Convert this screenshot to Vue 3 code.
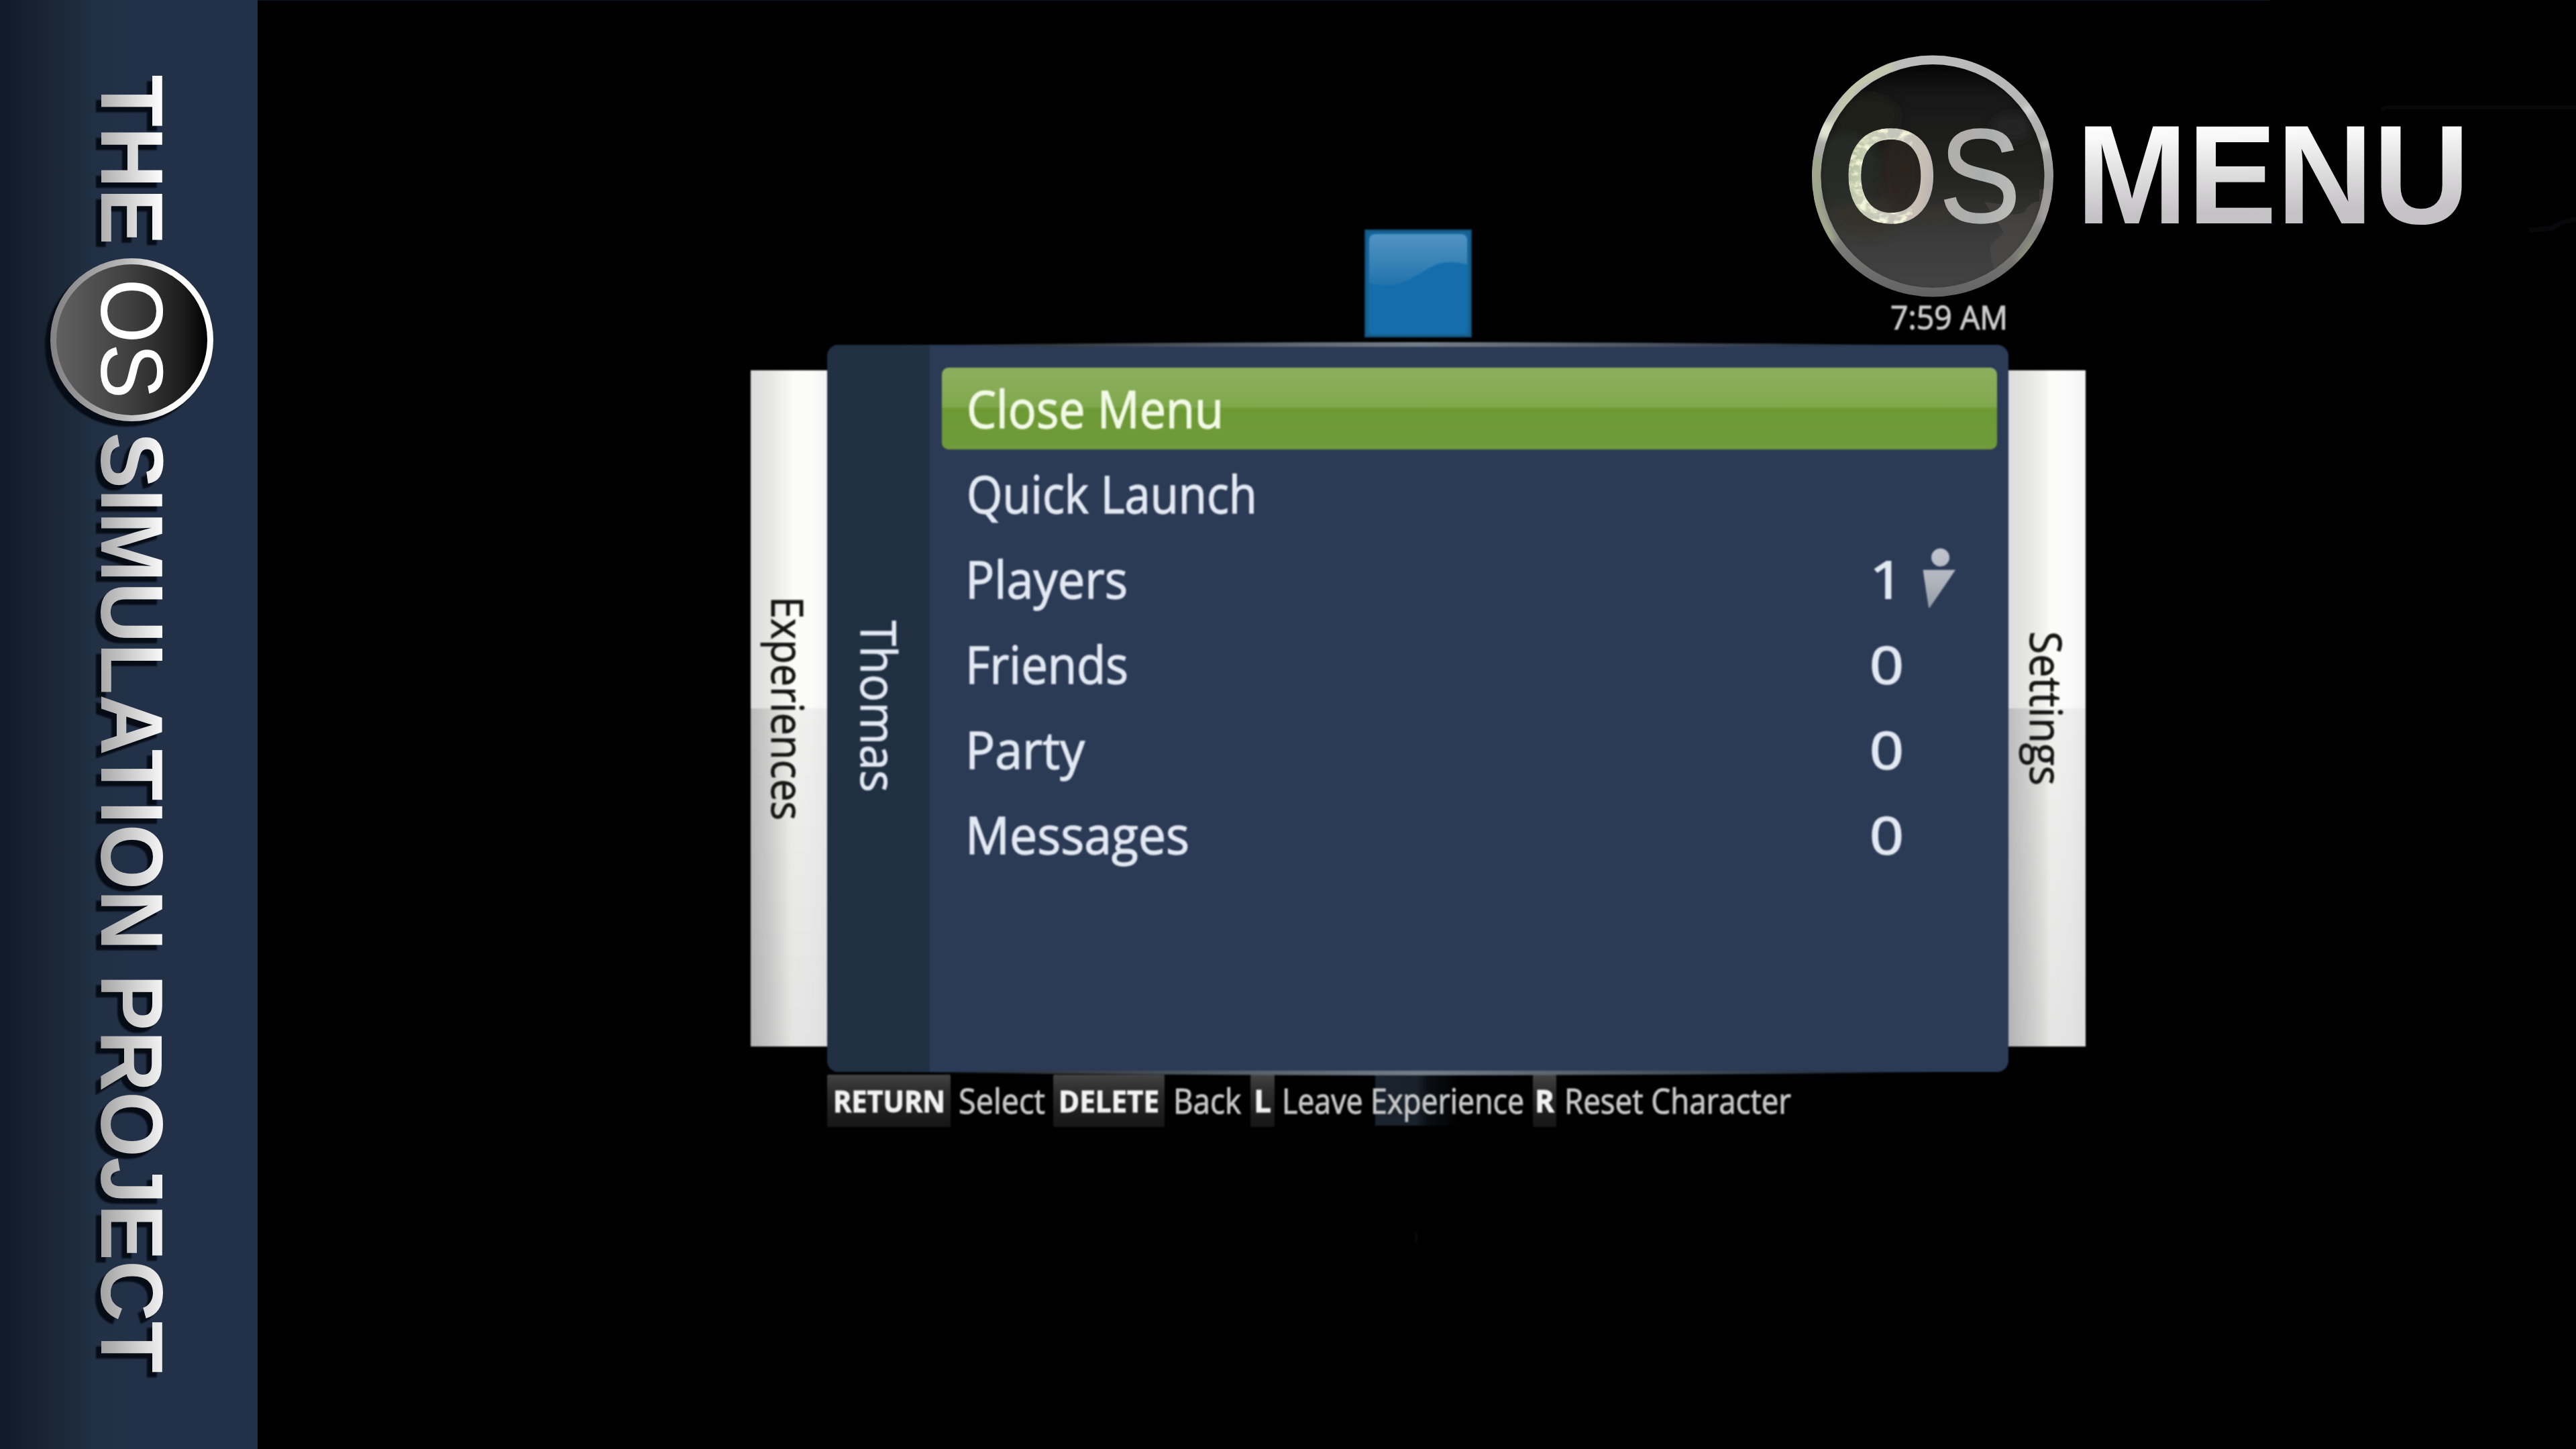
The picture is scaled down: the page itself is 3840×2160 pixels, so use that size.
<script setup>
import { h } from 'vue'

// A single line of text stretched to an exact advance; its box is the cap height.
const FitText = (p) => {
  const down = p.vertical !== undefined && p.vertical !== false
  return h(
    'svg',
    {
      width: down ? p.cap : p.len,
      height: down ? p.len : p.cap,
      overflow: 'visible',
      style: { display: 'block', flex: 'none', fontSize: p.size + 'px' },
    },
    [
      h(
        'text',
        {
          x: 0,
          y: down ? 0 : p.cap,
          fill: 'currentColor',
          stroke: 'currentColor',
          'stroke-width': p.weight || 0.9,
          textLength: p.len,
          lengthAdjust: 'spacingAndGlyphs',
          transform: down ? 'rotate(90)' : undefined,
        },
        p.text
      ),
    ]
  )
}
FitText.props = ['text', 'len', 'cap', 'size', 'vertical', 'weight']

const items = [
  { label: 'Close Menu', len: 383, inset: 36.5, active: true },
  { label: 'Quick Launch', len: 433, inset: 36.5 },
  { label: 'Players', len: 242, inset: 35, count: '1', person: true },
  { label: 'Friends', len: 243, inset: 35, count: '0' },
  { label: 'Party', len: 178, inset: 35, count: '0' },
  { label: 'Messages', len: 334, inset: 35, count: '0' },
]

const hints = [
  { key: 'RETURN', box: 184, keyLen: 167, keySize: 44, label: 'Select', len: 129, lead: 12, trail: 12 },
  { key: 'DELETE', box: 166, keyLen: 150, keySize: 44, label: 'Back', len: 101, lead: 12.5, trail: 14.5 },
  { key: 'L', box: 36, keyLen: 26, keySize: 46, label: 'Leave Experience', len: 361, lead: 11, trail: 13 },
  { key: 'R', box: 35, keyLen: 29, keySize: 46, label: 'Reset Character', len: 338, lead: 12, trail: 0 },
]
</script>

<template>
  <div class="screen">
    <aside class="sidebar">
      <svg width="384" height="2160" viewBox="0 0 384 2160">
        <defs>
          <linearGradient id="silver" gradientUnits="userSpaceOnUse" x1="110" y1="-91" x2="111" y2="16">
            <stop offset="0" stop-color="#ffffff" />
            <stop offset="1" stop-color="#a4a3a4" />
          </linearGradient>
          <linearGradient id="sideRing" x1="0" y1="0" x2="1" y2="0">
            <stop offset="0" stop-color="#838183" />
            <stop offset="0.45" stop-color="#b6b6b6" />
            <stop offset="0.75" stop-color="#ffffff" />
          </linearGradient>
          <linearGradient id="sideDisc" x1="0" y1="0" x2="1" y2="0">
            <stop offset="0" stop-color="#616161" />
            <stop offset="0.5" stop-color="#3e3e3e" />
            <stop offset="0.85" stop-color="#1b1b1b" />
            <stop offset="1" stop-color="#000000" />
          </linearGradient>
        </defs>
        <g class="brand" transform="translate(151 0) rotate(90)" fill="url(#silver)">
          <text x="111.5" y="0" textLength="253.5" lengthAdjust="spacingAndGlyphs">THE</text>
          <text x="644.3" y="0" textLength="772.8" lengthAdjust="spacingAndGlyphs">SIMULATION</text>
          <text x="1452.2" y="0" textLength="594.5" lengthAdjust="spacingAndGlyphs">PROJECT</text>
        </g>
        <g class="coin">
          <circle cx="196.5" cy="506.5" r="121.5" fill="url(#sideRing)" />
          <circle cx="196.5" cy="506.5" r="112.5" fill="url(#sideDisc)" />
        </g>
        <g transform="translate(151 0) rotate(90)" fill="#fff">
          <text class="os" font-size="132" x="415.5" y="0" textLength="179" lengthAdjust="spacingAndGlyphs">OS</text>
        </g>
      </svg>
    </aside>

    <main class="stage">
      <svg class="glints" width="3456" height="2160">
        <path d="M0 .5H3000" stroke="#08131b" />
        <path d="M3166 163l8-3H3456" stroke="#08080a" stroke-width="6" fill="none" />
        <path d="M3386 343l35-3 12-8 23-5" stroke="#08080a" stroke-width="7" fill="none" />
        <path d="M1727 1837v16" stroke="#070708" stroke-width="5" />
      </svg>

      <header class="title">
        <svg width="980" height="361" viewBox="0 0 980 361">
          <defs>
            <linearGradient id="ring" x1="0" y1="0" x2="0" y2="1">
              <stop offset="0" stop-color="#bcbcbc" />
              <stop offset="0.25" stop-color="#b6b6b6" />
              <stop offset="0.5" stop-color="#9b9b9a" />
              <stop offset="0.75" stop-color="#7f7f7d" />
              <stop offset="1" stop-color="#636263" />
            </linearGradient>
            <linearGradient id="disc" x1="0" y1="0" x2="0" y2="1">
              <stop offset="0" stop-color="#060606" />
              <stop offset="0.14" stop-color="#171717" />
              <stop offset="0.5" stop-color="#232322" />
              <stop offset="0.75" stop-color="#3a3a3a" />
              <stop offset="1" stop-color="#434343" />
            </linearGradient>
            <linearGradient id="osFill" gradientUnits="userSpaceOnUse" x1="53" y1="150" x2="305" y2="190">
              <stop offset="0" stop-color="#b4bb9c" />
              <stop offset="0.1" stop-color="#c8ceb2" />
              <stop offset="0.25" stop-color="#c4c5bb" />
              <stop offset="0.45" stop-color="#c8beb4" />
              <stop offset="0.56" stop-color="#b2afae" />
              <stop offset="0.8" stop-color="#acadad" />
              <stop offset="1" stop-color="#bbbcba" />
            </linearGradient>
            <linearGradient id="menuFill" x1="0" y1="109" x2="4" y2="253" gradientUnits="userSpaceOnUse">
              <stop offset="0" stop-color="#ffffff" />
              <stop offset="0.2" stop-color="#f8f8f8" />
              <stop offset="1" stop-color="#c4c2c4" />
            </linearGradient>
            <filter id="soft" x="-50%" y="-50%" width="200%" height="200%">
              <feGaussianBlur stdDeviation="7" />
            </filter>
            <filter id="softEdge"><feGaussianBlur stdDeviation="4" /></filter>
            <filter id="leaves" filterUnits="userSpaceOnUse" x="0" y="0" width="362" height="362" color-interpolation-filters="sRGB">
              <feTurbulence type="fractalNoise" baseFrequency="0.07 0.09" numOctaves="4" seed="7" x="0" y="0" width="150" height="300" />
              <feColorMatrix values="0 0 0 0 0.96  0 0 0 0 0.97  0 0 0 0 0.86  3.6 0 0 0 -1.65" result="light" />
              <feComposite in="light" in2="SourceAlpha" operator="in" result="flecks" />
              <feMerge>
                <feMergeNode in="SourceGraphic" />
                <feMergeNode in="flecks" />
              </feMerge>
            </filter>
            <clipPath id="inner"><circle cx="180" cy="180.5" r="166.5" /></clipPath>
            <clipPath id="band">
              <path clip-rule="evenodd" d="M0 180a180 180 0 1 0 360 0a180 180 0 1 0-360 0M13 180a167 167 0 1 0 334 0a167 167 0 1 0-334 0" />
            </clipPath>
          </defs>
          <circle cx="180" cy="180.5" r="180" fill="url(#ring)" />
          <g clip-path="url(#band)">
            <g filter="url(#softEdge)">
              <path d="M22 128L62 45L120 15" stroke="#c3c8ab" stroke-width="16" fill="none" />
              <path d="M20 100v24" stroke="#e2e3d2" stroke-width="22" fill="none" />
              <path d="M6 150v70l24 60" stroke="#a0a68a" stroke-width="16" fill="none" />
              <path d="M318 78l8 8M342 132l10 4" stroke="#dadbd6" stroke-width="12" fill="none" />
              <path d="M352 200l-6 50" stroke="#a39d9c" stroke-width="16" fill="none" />
              <path d="M332 275l-22 34" stroke="#8a8d78" stroke-width="16" fill="none" />
            </g>
          </g>
          <circle cx="180" cy="180.5" r="166.5" fill="url(#disc)" />
          <g clip-path="url(#inner)">
            <g filter="url(#soft)">
              <ellipse cx="50" cy="165" rx="50" ry="50" fill="#2b2e27" opacity="0.7" />
              <ellipse cx="80" cy="90" rx="50" ry="30" fill="#20211d" opacity="0.8" />
              <ellipse cx="80" cy="245" rx="50" ry="26" fill="#30332a" opacity="0.6" />
              <ellipse cx="133" cy="175" rx="28" ry="60" fill="#2c211a" opacity="0.7" />
              <ellipse cx="180" cy="238" rx="30" ry="8" fill="#3a3828" opacity="0.7" />
              <ellipse cx="298" cy="108" rx="30" ry="20" fill="#262827" opacity="0.8" />
            </g>
            <path d="M257 219l30 4l6 14q10 2 24-3q6-14 22-16v-18h20v120l-76 26q-18-30-17-63l20-18l-12-20z" fill="#55544f" opacity="0.42" />
            <circle cx="180" cy="184" r="170" fill="none" stroke="#000" stroke-opacity="0.3" stroke-width="5" filter="url(#softEdge)" />
          </g>
          <text class="os" font-size="198" x="46.5" y="248.5" textLength="265" lengthAdjust="spacingAndGlyphs" fill="url(#osFill)" stroke="url(#osFill)" stroke-width="1.4" filter="url(#leaves)">OS</text>
          <text class="word" x="394" y="251" textLength="586.6" lengthAdjust="spacingAndGlyphs" fill="url(#menuFill)">MENU</text>
        </svg>
      </header>

      <section class="console">
        <div class="clock"><FitText text="7:59 AM" :len="175" :cap="35" :size="49" :weight="1.2" /></div>

        <div class="deck">
          <div class="tab tab-left"><FitText vertical text="Experiences" :len="334" :cap="47" :size="66" /></div>
          <div class="panel">
            <nav class="user"><FitText vertical text="Thomas" :len="256" :cap="53" :size="74" /></nav>
            <ul class="list">
              <li v-for="item in items" :key="item.label" class="row" :class="{ active: item.active }" :style="{ paddingLeft: item.inset + 'px' }">
                <FitText :text="item.label" :len="item.len" :cap="55" :size="77" :weight="1.3" />
                <span v-if="item.count" class="count"><FitText :text="item.count" :len="51" :cap="55" :size="77" :weight="1.8" /></span>
                <span v-if="item.count" class="mark">
                  <svg v-if="item.person" width="50" height="90" viewBox="0 0 50 90">
                    <defs>
                      <linearGradient id="body" gradientUnits="userSpaceOnUse" x1="0" y1="0" x2="0" y2="90">
                        <stop offset="0" stop-color="#c0c5d0" />
                        <stop offset="0.6" stop-color="#aeb3bb" />
                        <stop offset="1" stop-color="#909aa3" />
                      </linearGradient>
                    </defs>
                    <circle cx="26.5" cy="14" r="13.5" fill="url(#body)" />
                    <path d="M.5 32.5H49L10.5 89H9z" fill="url(#body)" />
                  </svg>
                </span>
              </li>
            </ul>
          </div>
          <div class="tab tab-right"><FitText vertical text="Settings" :len="230" :cap="47" :size="66" /></div>

          <svg class="tile" width="160" height="161" viewBox="0 0 160 161">
            <defs>
              <linearGradient id="gloss" x1="0" y1="0" x2="0" y2="1">
                <stop offset="0" stop-color="#5294c3" />
                <stop offset="1" stop-color="#2274ac" />
              </linearGradient>
            </defs>
            <rect width="160" height="161" fill="#0e4a74" />
            <rect x="2" y="2" width="156" height="157" fill="#176190" />
            <rect x="6" y="6" width="148" height="150" rx="6" fill="#156dab" />
            <path d="M7 80V17Q7 7 17 7H143Q153 7 153 17V52C125 46 113 48 94 59C66 76 50 85 28 83Q15 82 7 80Z" fill="url(#gloss)" />
          </svg>

          <svg class="rim rim-top" width="1761" height="8" viewBox="0 0 1761 8" preserveAspectRatio="none">
            <defs>
              <linearGradient id="rim" x1="0" y1="0" x2="1" y2="0">
                <stop offset="0" stop-color="#2b3a55" stop-opacity="0" />
                <stop offset="0.15" stop-color="#30373f" />
                <stop offset="0.35" stop-color="#59616a" />
                <stop offset="0.5" stop-color="#747e88" />
                <stop offset="0.65" stop-color="#59616a" />
                <stop offset="0.85" stop-color="#2b3645" />
                <stop offset="1" stop-color="#2b3a55" stop-opacity="0" />
              </linearGradient>
            </defs>
            <path d="M80 5Q500 0 880 0T1680 5L1500 7H260Z" fill="url(#rim)" />
          </svg>
          <svg class="rim rim-bottom" width="1761" height="8" viewBox="0 0 1761 8">
            <path d="M80 2Q500 7 880 7T1680 2L1500 0H260Z" fill="url(#rim)" />
          </svg>
        </div>

        <footer class="hints">
          <template v-for="hint in hints" :key="hint.key">
            <kbd class="key" :style="{ width: hint.box + 'px' }">
              <FitText :text="hint.key" :len="hint.keyLen" :cap="hint.keySize * 0.72" :size="hint.keySize" />
            </kbd>
            <span class="hint" :style="{ marginLeft: hint.lead + 'px', marginRight: hint.trail + 'px' }">
              <FitText :text="hint.label" :len="hint.len" :cap="37" :size="51" :weight="1.1" />
            </span>
          </template>
        </footer>
      </section>
    </main>
  </div>
</template>

<style>
html,
body {
  background: #000;
  overflow: hidden;
}
</style>

<style scoped>
.screen {
  display: flex;
  width: 3840px;
  height: 2160px;
  overflow: hidden;
  background: #000;
  font-family: 'Open Sans', 'Noto Sans', sans-serif;
}
.sidebar {
  flex: none;
  width: 384px;
  height: 2160px;
  background: linear-gradient(90deg, #111a28 0, #16222f 50px, #1c2939 95px, #223045 145px, #233148 200px);
}
.sidebar svg,
.title svg {
  display: block;
  overflow: visible;
}
.brand text,
.word {
  font-family: 'Liberation Sans', Arial, sans-serif;
  font-weight: 700;
  font-size: 132px;
}
.word {
  font-size: 209.3px;
}
.os {
  font-family: 'Liberation Sans', Arial, sans-serif;
}
.brand {
  filter: drop-shadow(8px 8px 1px #060c15);
}
.coin {
  filter: drop-shadow(-8px 8px 1px #060c15);
}
.stage {
  position: relative;
  width: 3456px;
  display: flex;
  flex-direction: column;
}
.glints {
  position: absolute;
  inset: 0;
}
.title {
  padding: 82px 0 0 2317px;
  height: 361px;
}
.console {
  margin-left: 734.5px;
  width: 1990px;
  filter: blur(0.8px);
}
.clock {
  display: flex;
  justify-content: flex-end;
  height: 71px;
  padding: 13px 116px 0 0;
  box-sizing: border-box;
  color: #cbcbcb;
}
.deck {
  position: relative;
  display: flex;
  align-items: center;
  height: 1084px;
}
.tab {
  flex: none;
  height: 1008px;
  margin-top: -1px;
  display: flex;
  align-items: center;
  box-sizing: border-box;
  color: #161616;
}
.tab-left {
  width: 114.5px;
  padding-left: 31.4px;
  background:
    linear-gradient(180deg, transparent 0, transparent 50%, rgba(20, 20, 30, 0.05) 50%, rgba(20, 20, 30, 0.1) 100%),
    linear-gradient(90deg, rgba(0, 0, 0, 0.11), transparent 50%) 0 100% / 100% 50% no-repeat,
    linear-gradient(90deg, #dcdcdc 0, #e6e6e5 25%, #f4f4f2 46%, #fcfdfa 56%, #fbfbfa 80%, #f4f4f4 100%);
}
.tab-right {
  width: 114.5px;
  padding-left: 31.5px;
  background:
    linear-gradient(180deg, transparent 0, transparent 50%, rgba(20, 20, 30, 0.05) 50%, rgba(20, 20, 30, 0.1) 100%),
    linear-gradient(90deg, rgba(0, 0, 0, 0.1), transparent 50%) 0 100% / 100% 50% no-repeat,
    linear-gradient(90deg, #dcdcdc 0, #e6e6e5 25%, #f1f1ef 46%, #fcfdfa 54%, #fafafa 80%, #f2f2f2 100%);
}
.panel {
  flex: none;
  display: flex;
  width: 1761px;
  height: 1084px;
  border-radius: 17px;
  overflow: hidden;
  background: #2b3a55;
  color: #e3e9f2;
}
.user {
  flex: none;
  width: 153px;
  box-sizing: border-box;
  padding: 0 0 6px 49.5px;
  display: flex;
  align-items: center;
  background: #203042;
}
.list {
  flex: none;
  width: 1573px;
  margin: 34px 0 0 18px;
  padding: 0;
  list-style: none;
  display: flex;
  flex-direction: column;
  gap: 5px;
}
.row {
  display: flex;
  align-items: center;
  box-sizing: border-box;
  height: 122px;
  padding-top: 2.5px;
  border-radius: 10px;
}
.active {
  background: linear-gradient(180deg, #8bae5e 0, #87ac57 25%, #7fa94b 48%, #6e9a34 50%, #709a3c 100%);
  color: #f2fae6;
}
.count {
  margin-left: auto;
}
.mark {
  width: 111.5px;
  padding-left: 27.5px;
  height: 95px;
}
.tile {
  position: absolute;
  left: 915px;
  top: -172.5px;
}
.rim {
  position: absolute;
  left: 115px;
}
.rim-top {
  top: -4px;
}
.rim-bottom {
  top: 1082px;
}
.hints {
  display: flex;
  align-items: center;
  height: 78px;
  margin: 4px 0 0 114.5px;
  background:
    linear-gradient(90deg, #1b232e 0, #19212b 62px, #0a0e13 80px, transparent 125px) 817px 0 / 130px 76px no-repeat;
}
.key {
  flex: none;
  display: flex;
  align-items: center;
  justify-content: center;
  height: 78px;
  padding-top: 2px;
  box-sizing: border-box;
  border-radius: 2px;
  background: linear-gradient(180deg, #434343 0, #2e2e2e 30%, #202020 65%, #161616 100%);
  color: #f2f2f2;
  font-family: inherit;
  font-weight: 700;
}
.hint {
  color: #c6c6c6;
}
</style>
